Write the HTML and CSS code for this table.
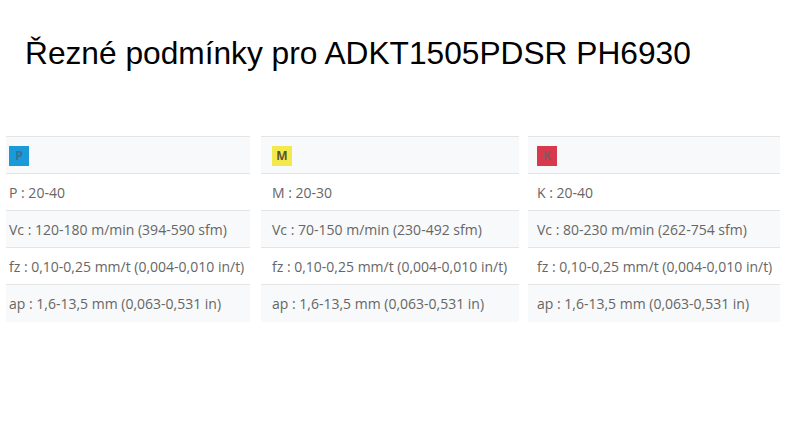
FILE: index.html
```html
<!DOCTYPE html>
<html lang="cs">
<head>
<meta charset="utf-8">
<link rel="stylesheet" href="styles.css">
</head>
<body>
<h1 class="title">Řezné podmínky pro ADKT1505PDSR PH6930</h1>
<div class="tables">
  <table class="cut cut-p">
    <tr class="head"><td><span class="badge badge-p">P</span></td></tr>
    <tr><td>P : 20-40</td></tr>
    <tr class="alt"><td>Vc : 120-180 m/min (394-590 sfm)</td></tr>
    <tr><td>fz : 0,10-0,25 mm/t (0,004-0,010 in/t)</td></tr>
    <tr class="alt"><td>ap : 1,6-13,5 mm (0,063-0,531 in)</td></tr>
  </table>
  <table class="cut cut-m">
    <tr class="head"><td><span class="badge badge-m">M</span></td></tr>
    <tr><td>M : 20-30</td></tr>
    <tr class="alt"><td>Vc : 70-150 m/min (230-492 sfm)</td></tr>
    <tr><td>fz : 0,10-0,25 mm/t (0,004-0,010 in/t)</td></tr>
    <tr class="alt"><td>ap : 1,6-13,5 mm (0,063-0,531 in)</td></tr>
  </table>
  <table class="cut cut-k">
    <tr class="head"><td><span class="badge badge-k">K</span></td></tr>
    <tr><td>K : 20-40</td></tr>
    <tr class="alt"><td>Vc : 80-230 m/min (262-754 sfm)</td></tr>
    <tr><td>fz : 0,10-0,25 mm/t (0,004-0,010 in/t)</td></tr>
    <tr class="alt"><td>ap : 1,6-13,5 mm (0,063-0,531 in)</td></tr>
  </table>
</div>
</body>
</html>
```
FILE: styles.css
```css
html, body {
  margin: 0;
  padding: 0;
  background: #ffffff;
}
.title {
  font-family: "Liberation Sans", Arial, sans-serif;
  font-weight: normal;
  font-size: 31.7px;
  color: #000;
  margin: 0;
  padding: 33px 0 0 25px;
  line-height: 40px;
}
.tables {
  display: flex;
  align-items: flex-start;
  margin-top: 63px;
  padding-left: 6px;
}
.cut {
  border-collapse: collapse;
  font-family: "Open Sans", sans-serif;
  font-size: 14px;
  color: #666;
}
.cut td {
  height: 37px;
  box-sizing: border-box;
  border-top: 1px solid #e4e4e4;
  padding: 0;
  white-space: nowrap;
  vertical-align: middle;
}
.cut .head td, .cut .alt td {
  background: #f8f9fa;
}
.cut-p { width: 244px; }
.cut-p td { padding-left: 3px; }
.cut-m { width: 258px; margin-left: 11px; }
.cut-m td { padding-left: 11px; }
.cut-k { width: 252px; margin-left: 9px; }
.cut-k td { padding-left: 9px; }
.badge {
  display: inline-block;
  width: 20px;
  height: 20px;
  line-height: 20px;
  text-align: center;
  font-weight: bold;
  font-size: 12px;
  vertical-align: middle;
}
.badge-p { background: #1a9ad8; color: #3b6f93; }
.badge-m { background: #f3e84c; color: #5a5530; }
.badge-k { background: #d63a4c; color: #8a5560; }
```
